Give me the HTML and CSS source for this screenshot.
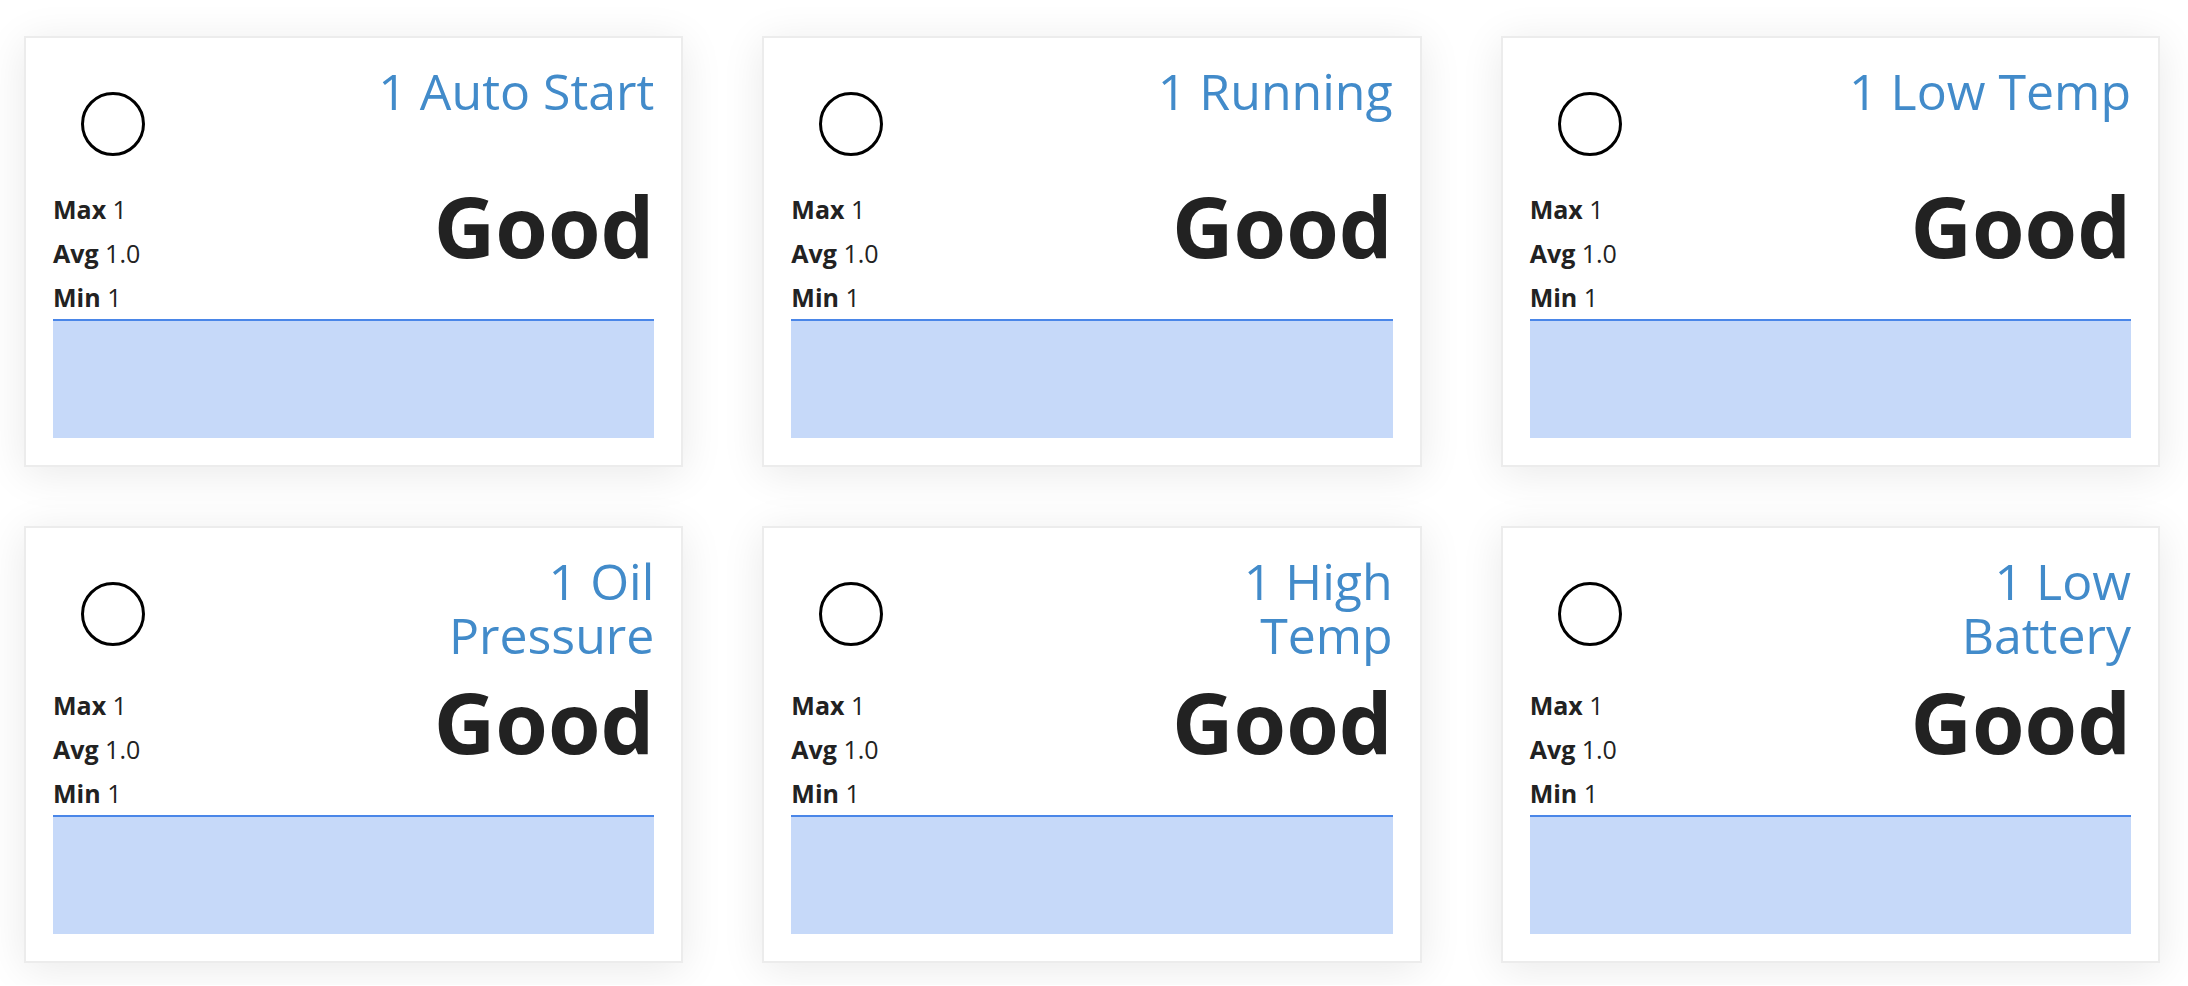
FILE: index.html
```html
<!DOCTYPE html>
<html>
<head>
<meta charset="utf-8">
<title>Alarms</title>
<link rel="stylesheet" href="styles.css">
</head>
<body>
<div class="grid">

  <div class="card">
    <div class="head">
      <svg class="lamp" width="120" height="123" viewBox="0 0 120 123"><circle cx="60" cy="60" r="30.5" fill="none" stroke="#000" stroke-width="3"/></svg>
      <div class="title">1 Auto Start</div>
    </div>
    <div class="body">
      <div class="stats">
        <div class="stat"><b>Max</b> 1</div>
        <div class="stat"><b>Avg</b> 1.0</div>
        <div class="stat"><b>Min</b> 1</div>
      </div>
      <div class="status">Good</div>
    </div>
    <div class="chart"></div>
  </div>

  <div class="card">
    <div class="head">
      <svg class="lamp" width="120" height="123" viewBox="0 0 120 123"><circle cx="60" cy="60" r="30.5" fill="none" stroke="#000" stroke-width="3"/></svg>
      <div class="title">1 Running</div>
    </div>
    <div class="body">
      <div class="stats">
        <div class="stat"><b>Max</b> 1</div>
        <div class="stat"><b>Avg</b> 1.0</div>
        <div class="stat"><b>Min</b> 1</div>
      </div>
      <div class="status">Good</div>
    </div>
    <div class="chart"></div>
  </div>

  <div class="card">
    <div class="head">
      <svg class="lamp" width="120" height="123" viewBox="0 0 120 123"><circle cx="60" cy="60" r="30.5" fill="none" stroke="#000" stroke-width="3"/></svg>
      <div class="title">1 Low Temp</div>
    </div>
    <div class="body">
      <div class="stats">
        <div class="stat"><b>Max</b> 1</div>
        <div class="stat"><b>Avg</b> 1.0</div>
        <div class="stat"><b>Min</b> 1</div>
      </div>
      <div class="status">Good</div>
    </div>
    <div class="chart"></div>
  </div>

  <div class="card">
    <div class="head">
      <svg class="lamp" width="120" height="123" viewBox="0 0 120 123"><circle cx="60" cy="60" r="30.5" fill="none" stroke="#000" stroke-width="3"/></svg>
      <div class="title">1 Oil Pressure</div>
    </div>
    <div class="body">
      <div class="stats">
        <div class="stat"><b>Max</b> 1</div>
        <div class="stat"><b>Avg</b> 1.0</div>
        <div class="stat"><b>Min</b> 1</div>
      </div>
      <div class="status">Good</div>
    </div>
    <div class="chart"></div>
  </div>

  <div class="card">
    <div class="head">
      <svg class="lamp" width="120" height="123" viewBox="0 0 120 123"><circle cx="60" cy="60" r="30.5" fill="none" stroke="#000" stroke-width="3"/></svg>
      <div class="title">1 High Temp</div>
    </div>
    <div class="body">
      <div class="stats">
        <div class="stat"><b>Max</b> 1</div>
        <div class="stat"><b>Avg</b> 1.0</div>
        <div class="stat"><b>Min</b> 1</div>
      </div>
      <div class="status">Good</div>
    </div>
    <div class="chart"></div>
  </div>

  <div class="card">
    <div class="head">
      <svg class="lamp" width="120" height="123" viewBox="0 0 120 123"><circle cx="60" cy="60" r="30.5" fill="none" stroke="#000" stroke-width="3"/></svg>
      <div class="title">1 Low Battery</div>
    </div>
    <div class="body">
      <div class="stats">
        <div class="stat"><b>Max</b> 1</div>
        <div class="stat"><b>Avg</b> 1.0</div>
        <div class="stat"><b>Min</b> 1</div>
      </div>
      <div class="status">Good</div>
    </div>
    <div class="chart"></div>
  </div>

</div>
</body>
</html>
```

FILE: styles.css
```css
html, body {
  margin: 0;
  padding: 0;
  background: #fff;
}

body {
  font-family: "Open Sans", "Noto Sans", sans-serif;
  color: #222;
}

.grid {
  display: grid;
  grid-template-columns: repeat(3, 1fr);
  column-gap: 79px;
  row-gap: 59px;
  padding: 36px 28px 22px 24px;
}

.card {
  background: #fff;
  border: 2px solid #ececec;
  box-shadow: 0 6px 40px rgba(0, 0, 0, 0.09);
  padding: 26px 27px 27px 27px;
  display: flex;
  flex-direction: column;
}

.head {
  display: flex;
  justify-content: space-between;
  align-items: flex-start;
}

.lamp {
  display: block;
  flex: none;
}

.title {
  max-width: 282px;
  text-align: right;
  color: #428bca;
  font-size: 50px;
  font-weight: 400;
  line-height: 54px;
  margin-bottom: 21px;
}

.body {
  display: flex;
  justify-content: space-between;
  align-items: flex-start;
}

.stats {
  font-size: 25px;
  font-weight: 400;
  line-height: 44px;
  color: #222;
}

.stat b {
  font-weight: 700;
}

.status {
  font-size: 85px;
  font-weight: 700;
  line-height: 76px;
  color: #222;
}

.chart {
  height: 117px;
  background: #c6d9f9;
  border-top: 2px solid #4a86e8;
}
```
